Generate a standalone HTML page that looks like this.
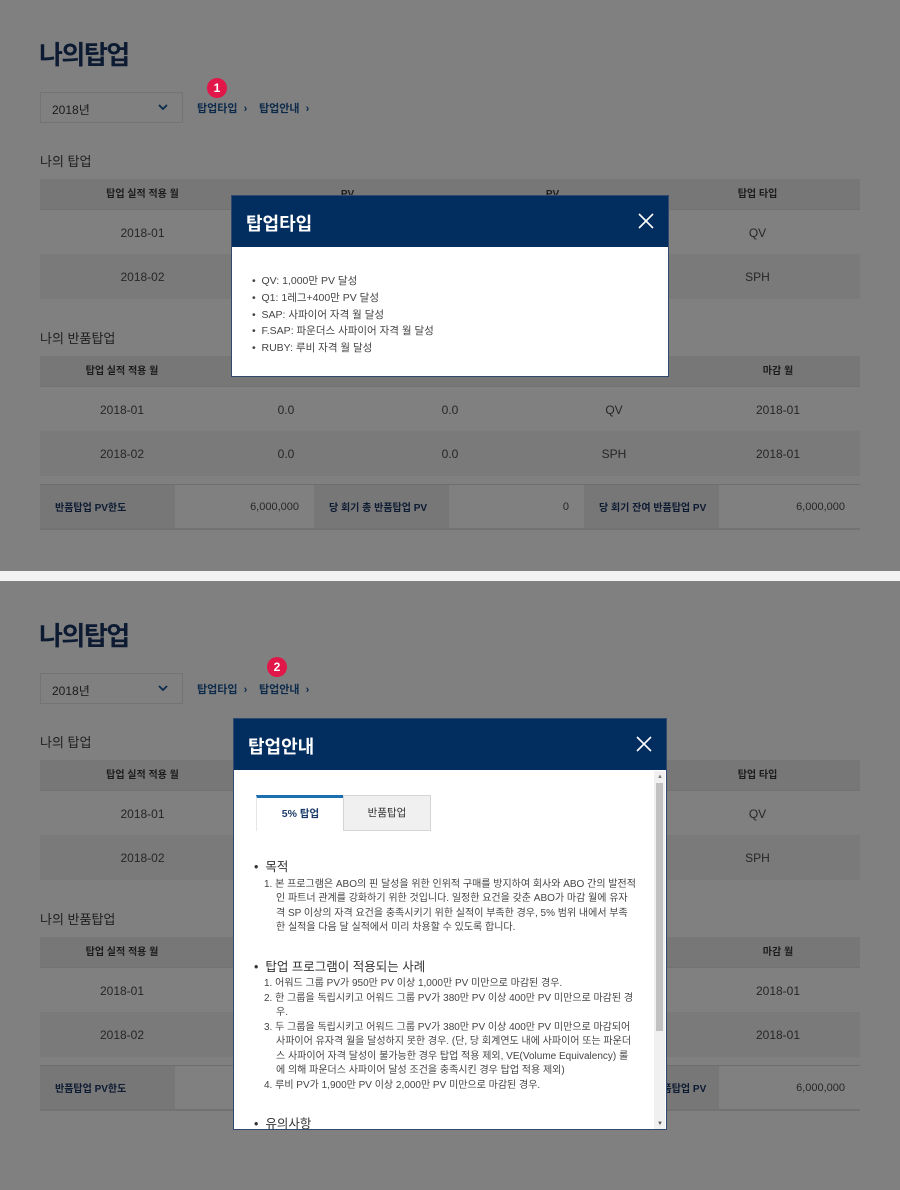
<!DOCTYPE html>
<html><head><meta charset="utf-8"><style>
*{margin:0;padding:0;box-sizing:border-box}
body{width:900px;height:1190px;background:#f3f3f3;font-family:"Liberation Sans","Noto Sans CJK KR",sans-serif;position:relative;overflow:hidden;color:#2a2a2a}
.scr{position:absolute;left:0;width:900px;height:571px;background:#808080}
.a{position:absolute}
.title{left:39px;top:35px;font-size:26px;font-weight:bold;color:#0c1a32;letter-spacing:-1.5px}
.sel{left:40px;top:92px;width:143px;height:31px;border:1px solid #747474;background:#808080;font-size:12px;color:#1a1a1a;padding:8px 0 0 11px}
.sel svg{position:absolute;right:14px;top:11px}
.lnk{font-size:11px;color:#0c2a4a;font-weight:bold}
.h2{font-size:13px;color:#1e1e1e;left:40px}
.row{position:absolute;left:40px;width:820px;display:flex}
.row div{flex:1;text-align:center;font-size:12px;color:#262626}
.hd{background:#777;border-bottom:1px solid #727272}
.hd div{font-size:10px;font-weight:bold;color:#1c1c1c}
.alt{background:#7a7a7a}
.sum{position:absolute;left:40px;width:820px;height:46px;border-top:1px solid #6e6e6e;border-bottom:2px solid #727272;display:flex}
.sum div{height:100%;font-size:11px;display:flex;align-items:center}
.sum .l{background:#777;font-weight:bold;color:#0c1a32;padding-left:15px;font-size:10px}
.sum .v{background:#808080;justify-content:flex-end;padding-right:15px;color:#262626}
.badge{width:20px;height:20px;border-radius:50%;background:#e1174a;color:#fff;font-size:12px;font-weight:bold;text-align:center;line-height:20px}
.modal{background:#fff;border:1px solid #2f4a6e}
.mh{background:#022d5f;height:51px;color:#fff;font-size:18px;font-weight:bold;padding:14px 0 0 14px;position:relative}
.mh svg{position:absolute;right:14px;top:17px}
.li{font-size:10.5px;color:#444;line-height:16.8px}
.hh{font-size:12.5px;color:#333}
</style></head><body>

<!-- screen 1 -->
<div class="scr" style="top:0">
<div class="a title">나의탑업</div>
<div class="a sel">2018년<svg width="10" height="7" viewBox="0 0 10 7"><path d="M1 1l4 4 4-4" stroke="#0c2a4a" stroke-width="1.8" fill="none"/></svg></div>
<div class="a lnk" style="left:197px;top:100px">탑업타입 &nbsp;›</div>
<div class="a lnk" style="left:259px;top:100px">탑업안내 &nbsp;›</div>
<div class="a h2" style="top:151px">나의 탑업</div>
<div class="row hd" style="top:179px;height:31px;line-height:31px"><div>탑업 실적 적용 월</div><div>PV</div><div>PV</div><div>탑업 타입</div></div>
<div class="row" style="top:210px;height:44px;line-height:46px"><div>2018-01</div><div></div><div></div><div>QV</div></div>
<div class="row alt" style="top:254px;height:45px;line-height:47px"><div>2018-02</div><div></div><div></div><div>SPH</div></div>
<div class="a h2" style="top:328px">나의 반품탑업</div>
<div class="row hd" style="top:356px;height:31px;line-height:31px"><div>탑업 실적 적용 월</div><div></div><div></div><div></div><div>마감 월</div></div>
<div class="row" style="top:387px;height:44px;line-height:46px"><div>2018-01</div><div>0.0</div><div>0.0</div><div>QV</div><div>2018-01</div></div>
<div class="row alt" style="top:431px;height:45px;line-height:47px"><div>2018-02</div><div>0.0</div><div>0.0</div><div>SPH</div><div>2018-01</div></div>
<div class="sum" style="top:484px"><div class="l" style="width:135px">반품탑업 PV한도</div><div class="v" style="width:139px">6,000,000</div><div class="l" style="width:135px">당 회기 총 반품탑업 PV</div><div class="v" style="width:135px">0</div><div class="l" style="width:135px">당 회기 잔여 반품탑업 PV</div><div class="v" style="width:141px">6,000,000</div></div>
<div class="a badge" style="left:207px;top:78px">1</div>
<div class="a modal" style="left:231px;top:195px;width:438px;height:182px">
 <div class="mh">탑업타입<svg width="16" height="16" viewBox="0 0 16 16"><path d="M1 1l14 14M15 1L1 15" stroke="#fff" stroke-width="1.6"/></svg></div>
 <div style="padding:26px 0 0 20px">
  <div class="li">• &nbsp;QV: 1,000만 PV 달성</div>
  <div class="li">• &nbsp;Q1: 1레그+400만 PV 달성</div>
  <div class="li">• &nbsp;SAP: 사파이어 자격 월 달성</div>
  <div class="li">• &nbsp;F.SAP: 파운더스 사파이어 자격 월 달성</div>
  <div class="li">• &nbsp;RUBY: 루비 자격 월 달성</div>
 </div>
</div>
</div>

<!-- screen 2 -->
<div class="scr" style="top:581px;height:609px">
<div class="a title">나의탑업</div>
<div class="a sel">2018년<svg width="10" height="7" viewBox="0 0 10 7"><path d="M1 1l4 4 4-4" stroke="#0c2a4a" stroke-width="1.8" fill="none"/></svg></div>
<div class="a lnk" style="left:197px;top:100px">탑업타입 &nbsp;›</div>
<div class="a lnk" style="left:259px;top:100px">탑업안내 &nbsp;›</div>
<div class="a h2" style="top:151px">나의 탑업</div>
<div class="row hd" style="top:179px;height:31px;line-height:31px"><div>탑업 실적 적용 월</div><div>PV</div><div>PV</div><div>탑업 타입</div></div>
<div class="row" style="top:210px;height:44px;line-height:46px"><div>2018-01</div><div></div><div></div><div>QV</div></div>
<div class="row alt" style="top:254px;height:45px;line-height:47px"><div>2018-02</div><div></div><div></div><div>SPH</div></div>
<div class="a h2" style="top:328px">나의 반품탑업</div>
<div class="row hd" style="top:356px;height:31px;line-height:31px"><div>탑업 실적 적용 월</div><div></div><div></div><div></div><div>마감 월</div></div>
<div class="row" style="top:387px;height:44px;line-height:46px"><div>2018-01</div><div>0.0</div><div>0.0</div><div>QV</div><div>2018-01</div></div>
<div class="row alt" style="top:431px;height:45px;line-height:47px"><div>2018-02</div><div>0.0</div><div>0.0</div><div>SPH</div><div>2018-01</div></div>
<div class="sum" style="top:484px"><div class="l" style="width:135px">반품탑업 PV한도</div><div class="v" style="width:139px">6,000,000</div><div class="l" style="width:135px">당 회기 총 반품탑업 PV</div><div class="v" style="width:135px">0</div><div class="l" style="width:135px">당 회기 잔여 반품탑업 PV</div><div class="v" style="width:141px">6,000,000</div></div>
<div class="a badge" style="left:267px;top:76px">2</div>
<div class="a modal" style="left:233px;top:137px;width:434px;height:412px;overflow:hidden">
 <div class="mh">탑업안내<svg width="16" height="16" viewBox="0 0 16 16"><path d="M1 1l14 14M15 1L1 15" stroke="#fff" stroke-width="1.6"/></svg></div>
 <div class="a" style="left:420px;top:52px;width:11px;height:358px;background:#f0f0f0">
  <div style="position:absolute;left:2px;top:12px;width:7px;height:248px;background:#c1c1c1"></div>
  <div style="position:absolute;left:3px;top:3px;font-size:6px;color:#777">▲</div>
  <div style="position:absolute;left:3px;bottom:2px;font-size:6px;color:#555">▼</div>
 </div>
 <div class="a" style="left:22px;top:76px;width:88px;height:36px;border-top:3px solid #1a6fb0;background:#fff;border-left:1px solid #e6e6e6;font-size:10.5px;font-weight:bold;color:#1b3c6a;text-align:center;line-height:32px">5% 탑업</div>
 <div class="a" style="left:109px;top:76px;width:88px;height:36px;border:1px solid #d4d4d4;background:#f0f0f0;font-size:10.5px;color:#333;text-align:center;line-height:34px">반품탑업</div>
 <div class="a" style="left:20px;top:141px;width:382px;font-size:10px;color:#444;line-height:14.5px">
  <div class="hh" style="margin-bottom:3px">• &nbsp;목적</div>
  <div style="padding-left:22px;text-indent:-12px">1. 본 프로그램은 ABO의 핀 달성을 위한 인위적 구매를 방지하여 회사와 ABO 간의 발전적인 파트너 관계를 강화하기 위한 것입니다. 일정한 요건을 갖춘 ABO가 마감 월에 유자격 SP 이상의 자격 요건을 충족시키기 위한 실적이 부족한 경우, 5% 범위 내에서 부족한 실적을 다음 달 실적에서 미리 차용할 수 있도록 합니다.</div>
  <div class="hh" style="margin:24px 0 3px">• &nbsp;탑업 프로그램이 적용되는 사례</div>
  <div style="padding-left:22px;text-indent:-12px">1. 어워드 그룹 PV가 950만 PV 이상 1,000만 PV 미만으로 마감된 경우.</div>
  <div style="padding-left:22px;text-indent:-12px">2. 한 그룹을 독립시키고 어워드 그룹 PV가 380만 PV 이상 400만 PV 미만으로 마감된 경우.</div>
  <div style="padding-left:22px;text-indent:-12px">3. 두 그룹을 독립시키고 어워드 그룹 PV가 380만 PV 이상 400만 PV 미만으로 마감되어 사파이어 유자격 월을 달성하지 못한 경우. (단, 당 회계연도 내에 사파이어 또는 파운더스 사파이어 자격 달성이 불가능한 경우 탑업 적용 제외, VE(Volume Equivalency) 룰에 의해 파운더스 사파이어 달성 조건을 충족시킨 경우 탑업 적용 제외)</div>
  <div style="padding-left:22px;text-indent:-12px">4. 루비 PV가 1,900만 PV 이상 2,000만 PV 미만으로 마감된 경우.</div>
  <div class="hh" style="margin-top:24px">• &nbsp;유의사항</div>
 </div>
</div>
</div>
</body></html>
